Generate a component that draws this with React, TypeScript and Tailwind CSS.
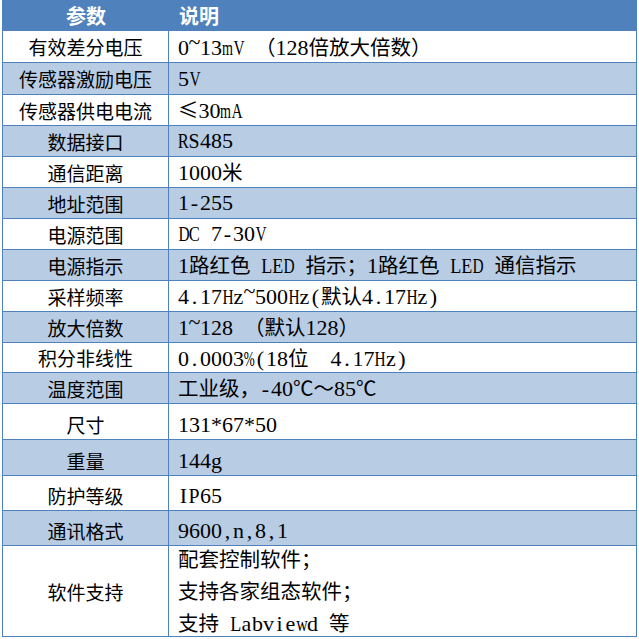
import React from 'react';

interface SpecRow {
  name: string;
  value: string[];
  height: string;
  shaded: boolean;
  low?: boolean;
}

const ROWS: SpecRow[] = [
  { name: '有效差分电压', value: ['0~13mV （128倍放大倍数）'], height: 'h-[32px]', shaded: false },
  { name: '传感器激励电压', value: ['5V'], height: 'h-[32px]', shaded: true },
  { name: '传感器供电电流', value: ['≤30mA'], height: 'h-[31px]', shaded: false },
  { name: '数据接口', value: ['RS485'], height: 'h-[31px]', shaded: true },
  { name: '通信距离', value: ['1000米'], height: 'h-[31px]', shaded: false },
  { name: '地址范围', value: ['1-255'], height: 'h-[31px]', shaded: true },
  { name: '电源范围', value: ['DC 7-30V'], height: 'h-[31px]', shaded: false },
  { name: '电源指示', value: ['1路红色 LED 指示；1路红色 LED 通信指示'], height: 'h-[31px]', shaded: true },
  { name: '采样频率', value: ['4.17Hz~500Hz(默认4.17Hz)'], height: 'h-[31px]', shaded: false },
  { name: '放大倍数', value: ['1~128 （默认128）'], height: 'h-[31px]', shaded: true },
  { name: '积分非线性', value: ['0.0003%(18位  4.17Hz)'], height: 'h-[30px]', shaded: false },
  { name: '温度范围', value: ['工业级，-40℃～85℃'], height: 'h-[31px]', shaded: true },
  { name: '尺寸', value: ['131*67*50'], height: 'h-[36px]', shaded: false, low: true },
  { name: '重量', value: ['144g'], height: 'h-[36px]', shaded: true, low: true },
  { name: '防护等级', value: ['IP65'], height: 'h-[35px]', shaded: false, low: true },
  { name: '通讯格式', value: ['9600,n,8,1'], height: 'h-[35px]', shaded: true, low: true },
  { name: '软件支持', value: ['配套控制软件；', '支持各家组态软件；', '支持 Labviewd 等'], height: 'h-[90px]', shaded: false },
];

// half-width latin glyphs are squeezed into a fixed cell, like the SimSun original
const SQUEEZE: Record<string, string> = {
  m: 'scale-x-[0.64]',
  M: 'scale-x-[0.56]',
  H: 'scale-x-[0.7]',
  D: 'scale-x-[0.7]',
  V: 'scale-x-[0.7]',
  A: 'scale-x-[0.7]',
  C: 'scale-x-[0.75]',
  R: 'scale-x-[0.75]',
  w: 'scale-x-[0.72]',
  E: 'scale-x-[0.82]',
  L: 'scale-x-[0.82]',
  P: 'scale-x-[0.9]',
  S: 'scale-x-[0.9]',
  '%': 'scale-x-[0.6]',
  '~': '-translate-y-[6px]',
};

const MixedText = ({ text }: { text: string }) => {
  const parts: React.ReactNode[] = [];
  let cjk = '';
  const flush = (key: string) => {
    if (cjk) {
      parts.push(
        <span key={key} className="text-[20.5px]" style={{ fontFamily: '"Noto Sans CJK SC", sans-serif' }}>
          {cjk}
        </span>
      );
      cjk = '';
    }
  };
  Array.from(text).forEach((ch, i) => {
    if (ch.charCodeAt(0) < 128) {
      flush(`c${i}`);
      parts.push(
        <span key={i} className="inline-flex justify-center w-[11px]">
          <span className={`shrink-0 ${SQUEEZE[ch] ?? ''}`}>{ch === ' ' ? '\u00a0' : ch}</span>
        </span>
      );
    } else {
      cjk += ch;
    }
  });
  flush('end');
  return <>{parts}</>;
};

export default function App() {
  return (
    <div className="w-[639px] h-[639px] bg-white pl-[2px]">
      <div
        className="w-[635px] border-x border-b border-[#4f81bd] text-black"
        style={{ fontFamily: '"Liberation Serif", "Noto Sans CJK SC", serif' }}
      >
        <div
          className="flex h-[31px] bg-[#4f81bd] text-white font-bold text-[20px] leading-none"
          style={{ fontFamily: '"Noto Sans CJK SC", sans-serif' }}
        >
          <div className="w-[166px] flex items-center justify-center">参数</div>
          <div className="flex-1 flex items-center pl-[10px]">说明</div>
        </div>
        {ROWS.map((row, i) => (
          <div
            key={row.name}
            className={`flex ${row.height} ${row.shaded ? 'bg-[#b8cce4]' : 'bg-white'} ${i < ROWS.length - 1 ? 'border-b border-[#4f81bd]' : ''}`}
          >
            <div
              className={`w-[166px] flex items-center justify-center border-r border-[#4f81bd] text-[19px] leading-none ${row.low ? 'pt-[5px]' : ''}`}
              style={{ fontFamily: '"Noto Sans CJK SC", sans-serif' }}
            >
              {row.name}
            </div>
            <div
              className={`flex-1 flex flex-col justify-center pl-[9px] text-[22px] leading-[30px] whitespace-nowrap ${row.low ? 'pt-[6px]' : ''}`}
            >
              {row.value.map((line) => (
                <div key={line}>
                  <MixedText text={line} />
                </div>
              ))}
            </div>
          </div>
        ))}
      </div>
    </div>
  );
}
